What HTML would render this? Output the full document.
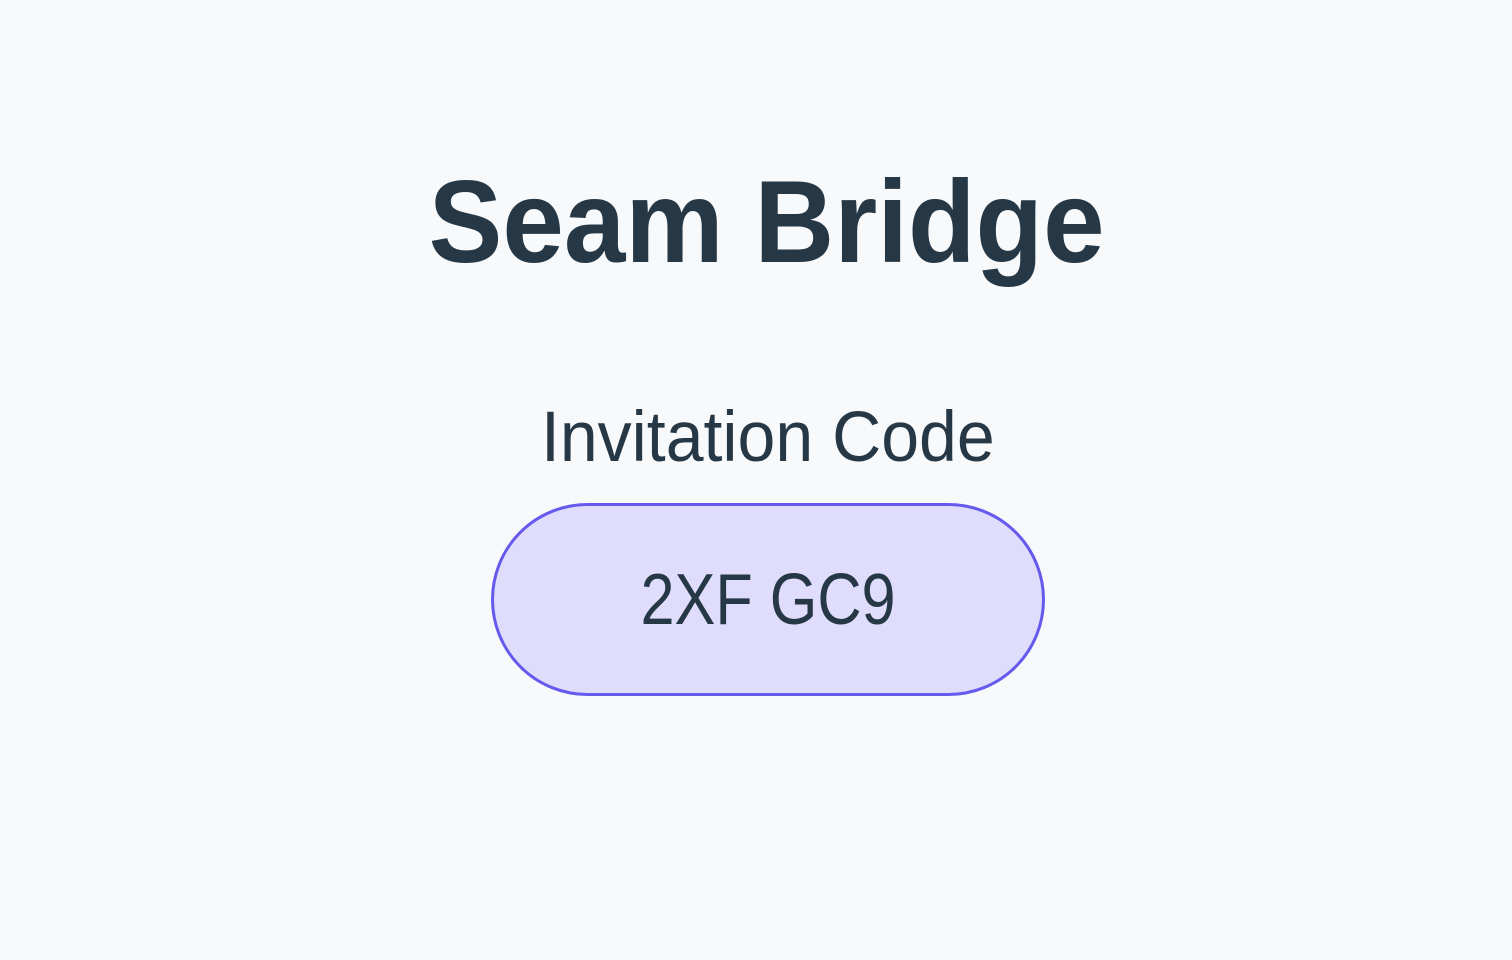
<!DOCTYPE html>
<html><head><meta charset="utf-8"><style>
html,body{margin:0;padding:0;width:1512px;height:960px;background:#f7f9fa;overflow:hidden;font-family:"Liberation Sans",sans-serif;color:#263746}
.t{position:absolute;left:0;width:1512px;text-align:center;white-space:nowrap}
.t span{display:inline-block}
#h{top:152px;font-size:117px;font-weight:bold;line-height:140px;left:11px}
#h span{transform:scaleX(0.945);letter-spacing:0}
#s{top:398px;font-size:71px;line-height:80px;left:12px}
#s span{transform:scaleX(0.958)}
#p{position:absolute;left:491px;top:503px;width:548px;height:187px;border:3px solid #6659ee;border-radius:100px;background:#dfddfb}
#c{top:560px;font-size:72px;line-height:80px;left:12px}
#c span{transform:scaleX(0.85)}
</style></head><body>
<div class="t" id="h"><span>Seam Bridge</span></div>
<div class="t" id="s"><span>Invitation Code</span></div>
<div id="p"></div>
<div class="t" id="c"><span>2XF GC9</span></div>
</body></html>
